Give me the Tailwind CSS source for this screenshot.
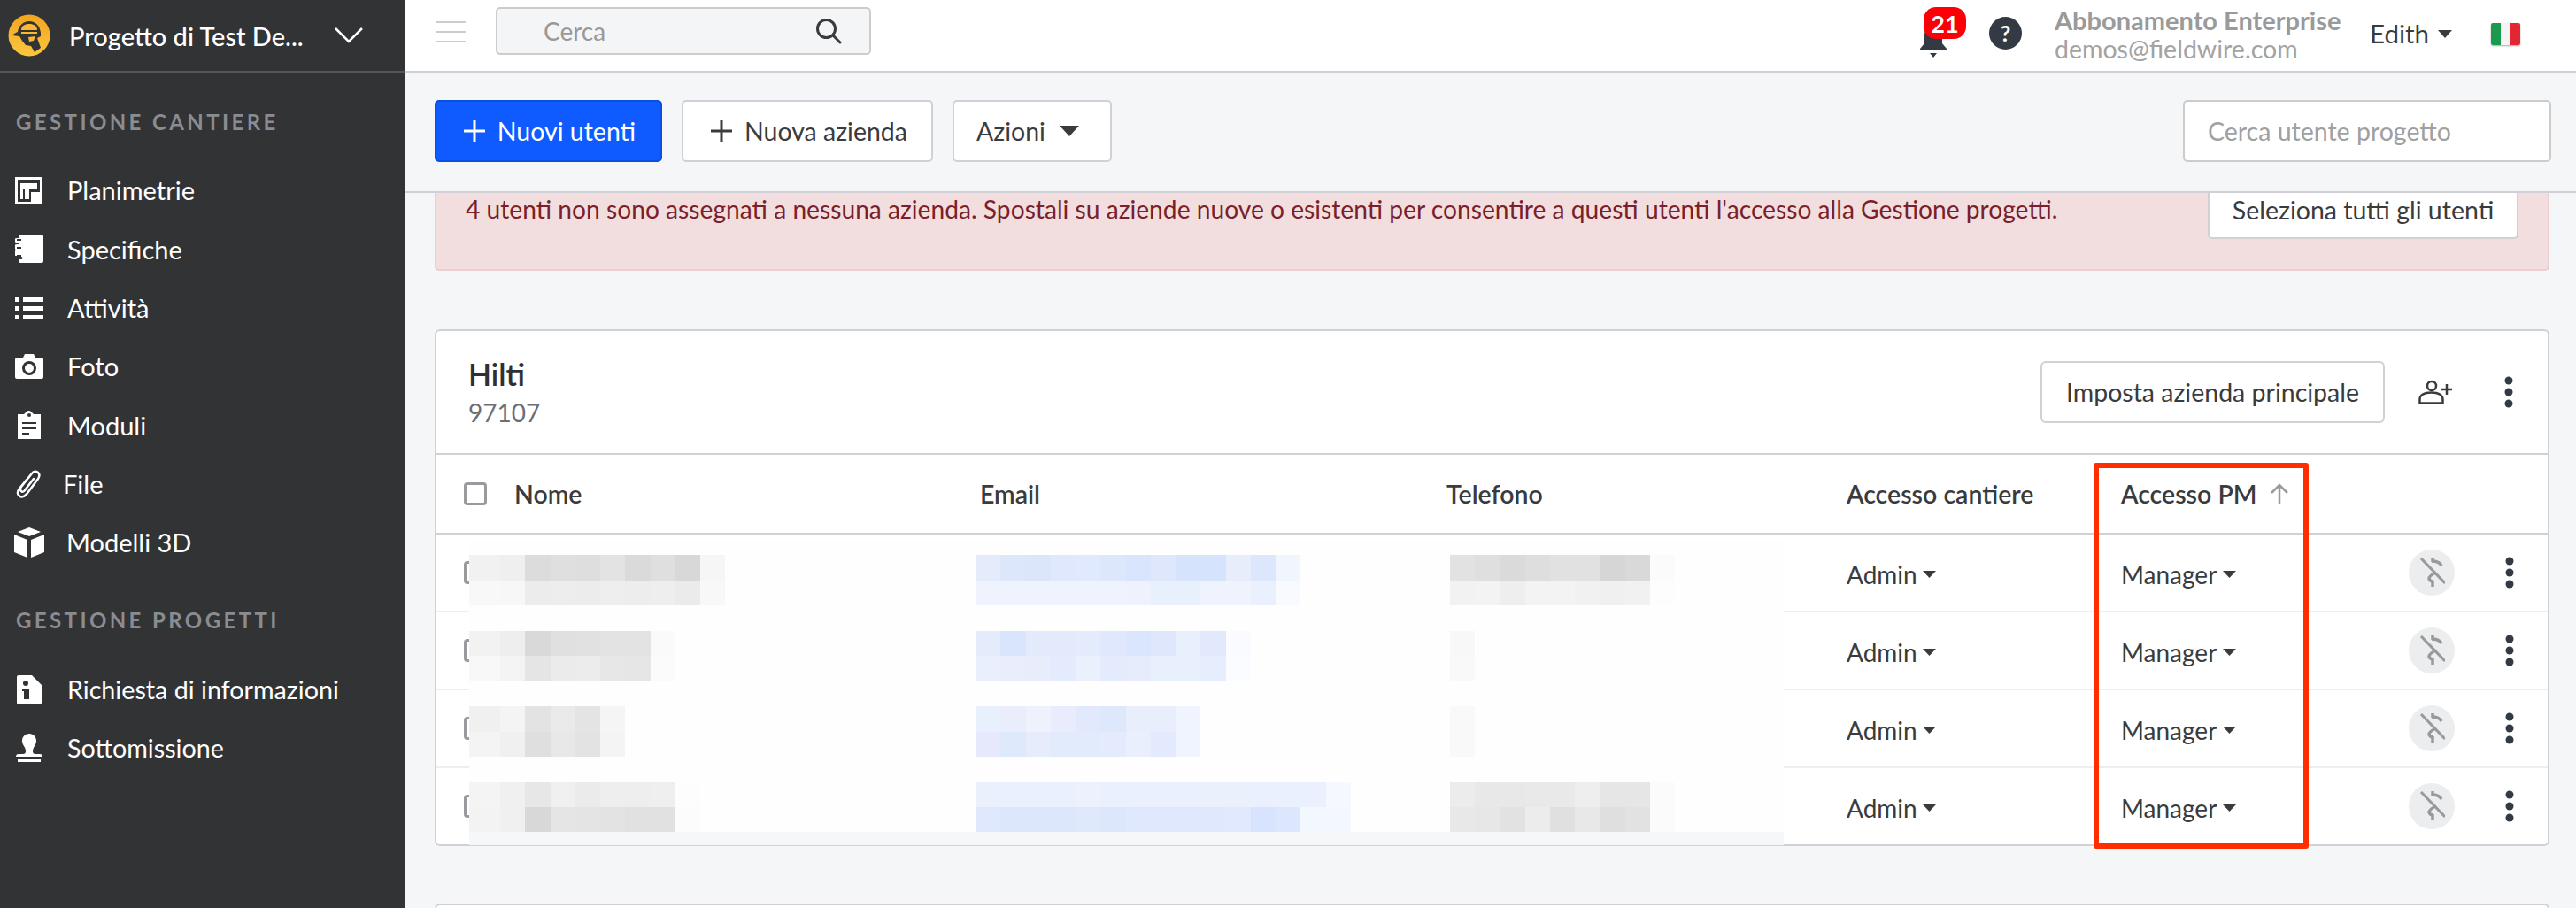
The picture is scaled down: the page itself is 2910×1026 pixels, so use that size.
<!DOCTYPE html>
<html lang="it">
<head>
<meta charset="utf-8">
<script src="https://cdn.jsdelivr.net/npm/@tailwindcss/browser@4"></script>
</head>
<body class="m-0">
<div class="flex h-[1026px] w-[2910px] overflow-hidden bg-[#f5f6f8] font-['Lato',sans-serif] text-[28px] text-[#3a3b3d]">
  <aside class="w-[458px] shrink-0 bg-[#323335] text-[29px] text-white">
    <div class="flex h-[82px] items-center border-b-2 border-[#55565a] pl-[9px]">
      <svg width="48" height="48" viewBox="0 0 48 48">
        <defs><linearGradient id="g" x1="0" y1="0" x2="0" y2="1"><stop offset="0" stop-color="#f2a51f"/><stop offset="1" stop-color="#fcc63f"/></linearGradient></defs>
        <circle cx="24" cy="24" r="23.5" fill="url(#g)"/>
        <path d="M5 24c1-2 4-3 6-4C12 13 17 8 24 8s12 5 13 13v4l-4 2 4 11-7 5-4-7-6-1-4-5-3-5z" fill="#323335"/>
        <path d="M15 18c0-5 4-7 9-7s9 2 9 7z" fill="#f9b733"/>
        <rect x="15" y="20" width="18" height="2" fill="#f9b733"/>
        <path d="M23 26l8-1-2 5-5 1z" fill="#f9b733"/>
      </svg>
      <span class="ml-[21px] w-[278px] font-medium leading-none whitespace-nowrap">Progetto di Test De...</span>
      <svg class="ml-[21px]" width="34" height="20" viewBox="0 0 34 20" fill="none" stroke="#fff" stroke-width="2.5"><path d="M2 2l15 15L32 2"/></svg>
    </div>
    <div class="pt-[42px] pl-[18px] text-[24px] font-bold leading-[28px] tracking-[3.4px] text-[#8b8c91] whitespace-nowrap">GESTIONE CANTIERE</div>
    <nav class="mt-[30px] flex flex-col">
      <a class="flex h-[66.300px] items-center gap-[27px] pl-[17px]">
        <svg width="32" height="32" viewBox="0 0 32 32" fill="#fff"><path fill-rule="evenodd" d="M0 1h31v31H0zM3 4v25h25V4z"/><path d="M6 8h19v6H16v12h-5V14H9v12H6z"/><path d="M18 18h10v11H18z"/></svg>
        <span>Planimetrie</span>
      </a>
      <a class="flex h-[66.300px] items-center gap-[27px] pl-[17px]">
        <svg width="32" height="32" viewBox="0 0 32 32" fill="#fff"><path d="M6 0h24a2 2 0 0 1 2 2v28a2 2 0 0 1-2 2H6a2 2 0 0 1-2-2v-2h3a1.500 1.500 0 0 0 0-3H4v-1H1.500a3 3 0 0 1 0-6H4v-1H2a3 3 0 0 1 0-6h2v-1H2a3 3 0 0 1 0-6h2V2a2 2 0 0 1 2-2z"/><path d="M2 6h5M2 15h5M2 24h5" stroke="#323335" stroke-width="2"/></svg>
        <span>Specifiche</span>
      </a>
      <a class="flex h-[66.300px] items-center gap-[27px] pl-[17px]">
        <svg width="32" height="26" viewBox="0 0 32 26" fill="#fff"><path d="M0 1h5v5H0zM9 1h23v5H9zM0 11h5v5H0zM9 11h23v5H9zM0 21h5v5H0zM9 21h23v5H9z"/></svg>
        <span>Attività</span>
      </a>
      <a class="flex h-[66.300px] items-center gap-[27px] pl-[17px]">
        <svg width="32" height="28" viewBox="0 0 32 28" fill="#fff"><path fill-rule="evenodd" d="M2 4h7l2-4h10l2 4h7a2 2 0 0 1 2 2v20a2 2 0 0 1-2 2H2a2 2 0 0 1-2-2V6a2 2 0 0 1 2-2zM16 8a8 8 0 1 0 0 16 8 8 0 0 0 0-16zm0 3a5 5 0 1 1 0 10 5 5 0 0 1 0-10z"/></svg>
        <span>Foto</span>
      </a>
      <a class="flex h-[66.300px] items-center gap-[27px] pl-[17px]">
        <svg width="32" height="32" viewBox="0 0 32 32" fill="#fff"><path fill-rule="evenodd" d="M3 4h7l3-3a4 4 0 0 1 5 0l3 3h8v28H3zM16 3a2 2 0 1 0 0 4 2 2 0 0 0 0-4zM8 13v2h16v-2zM8 19v2h16v-2zM8 25v2h8v-2z"/></svg>
        <span>Moduli</span>
      </a>
      <a class="flex h-[66.300px] items-center gap-[24px] pl-[17px]">
        <svg width="30" height="32" viewBox="0 0 30 32" fill="none" stroke="#fff" stroke-width="2.5" stroke-linecap="round"><path d="M13 11L5 21c-3 4-2 7 0 8.500s5 1 8-2L26 10c2-3 2-5 0-7s-5-1.500-7 1L7 19c-2 3-1 4 0 5s3 1 4-1l10-13"/></svg>
        <span>File</span>
      </a>
      <a class="flex h-[66.300px] items-center gap-[25px] pl-[16px]">
        <svg width="34" height="34" viewBox="0 0 34 34" fill="#fff"><path d="M17 0l13 5-13 5L4 5zM0 8l15 6v20L0 28zM34 8l-15 6v20l15-6z"/></svg>
        <span>Modelli 3D</span>
      </a>
    </nav>
    <div class="mt-[41px] pl-[18px] text-[24px] font-bold leading-[28px] tracking-[3.4px] text-[#8b8c91] whitespace-nowrap">GESTIONE PROGETTI</div>
    <nav class="mt-[31px] flex flex-col text-[28.700px]">
      <a class="flex h-[66.300px] items-center gap-[27px] pl-[19px]">
        <svg class="mr-[2px]" width="28" height="33" viewBox="0 0 28 33" fill="#fff"><path fill-rule="evenodd" d="M2 0h15l11 11v20a2 2 0 0 1-2 2H2a2 2 0 0 1-2-2V2a2 2 0 0 1 2-2zM7 9a3 3 0 1 0 6 0 3 3 0 0 0-6 0zM6 15v3h2v9h6V15z"/></svg>
        <span>Richiesta di informazioni</span>
      </a>
      <a class="flex h-[66.300px] items-center gap-[27px] pl-[18px]">
        <svg class="mr-[1px]" width="30" height="33" viewBox="0 0 30 33" fill="#fff"><path d="M15 0c5 0 8 4 8 8 0 5-4 7-4 12 0 2 1 3 3 3h5c2 0 3 1 3 3H0c0-2 1-3 3-3h5c2 0 3-1 3-3 0-5-4-7-4-12 0-4 3-8 8-8zM2 29h26v3H2z"/></svg>
        <span>Sottomissione</span>
      </a>
    </nav>
  </aside>

  <main class="flex min-w-0 flex-1 flex-col">
    <header class="flex h-[82px] shrink-0 items-center border-b-2 border-[#cfcfd4] bg-white pb-[4px]">
      <div class="mb-[4px] ml-[35px] flex w-[33px] flex-col gap-[9px]">
        <div class="h-[2px] bg-[#cccccc]"></div><div class="h-[2px] bg-[#cccccc]"></div><div class="h-[2px] bg-[#cccccc]"></div>
      </div>
      <div class="mb-[6px] ml-[34px] flex h-[54px] w-[424px] items-center rounded-[5px] border-2 border-[#cccccc] bg-[#f4f5f7] pl-[52px] pr-[31px] text-[#999999]">
        <span class="flex-1">Cerca</span>
        <svg width="30" height="30" viewBox="0 0 30 30" fill="none" stroke="#3a3b3d" stroke-width="3" stroke-linecap="round"><circle cx="12.500" cy="12.500" r="10"/><path d="M20 20l8 8"/></svg>
      </div>
      <div class="relative ml-[1184px] h-[60px] w-[60px]">
        <svg class="absolute left-[0px] top-[21px]" width="32" height="36" viewBox="0 0 32 36" fill="#343a44"><path d="M16 0c6 0 10 4 10 11v9l5 6v2H1v-2l5-6v-9C6 4 10 0 16 0zM12 31h8l-4 5z"/></svg>
        <span class="absolute left-[5px] top-[0px] flex h-[36px] w-[48px] items-center justify-center rounded-[14px] bg-[#fb0007] text-[27px] font-bold leading-none text-white">21</span>
      </div>
      <div class="mb-[2px] ml-[19px] flex h-[37px] w-[37px] items-center justify-center rounded-full bg-[#343a44] text-[25px] font-bold leading-none text-white">?</div>
      <div class="ml-[37px] flex w-[356px] flex-col whitespace-nowrap">
        <span class="text-[29px] font-bold leading-[34px] text-[#9a9a9a]">Abbonamento Enterprise</span>
        <span class="text-[28.500px] leading-[31px] text-[#a3a3a3]">demos@fieldwire.com</span>
      </div>
      <span class="text-[29.500px] leading-none">Edith</span>
      <svg class="ml-[10px]" width="16" height="9" viewBox="0 0 16 9" fill="#3a3b3d"><path d="M0 0h16L8 9z"/></svg>
      <div class="ml-[44px] flex h-[25px] w-[33px] overflow-hidden rounded-[2px] shadow-[0_1px_2px_rgba(0,0,0,0.35)]">
        <div class="flex-1 bg-[#1a9a4e]"></div><div class="flex-1 bg-[#f4f4f4]"></div><div class="flex-1 bg-[#e3262f]"></div>
      </div>
    </header>

    <div class="flex h-[136px] shrink-0 items-center gap-[22px] border-b-2 border-[#d0d0d6] pl-[33px] pr-[28px] pb-[2px] text-[28.500px]">
      <button class="flex h-[70px] w-[257px] items-center justify-center gap-[14px] rounded-[5px] border-2 border-[#0a4fe0] bg-[#0f5bff] pl-[3px] text-white">
        <svg width="24" height="24" viewBox="0 0 24 24" fill="none" stroke="#fff" stroke-width="3"><path d="M12 0v24M0 12h24"/></svg>Nuovi utenti
      </button>
      <button class="flex h-[70px] w-[284px] items-center justify-center gap-[14px] rounded-[5px] border-2 border-[#d0d0d6] bg-white pl-[4px]">
        <svg width="24" height="24" viewBox="0 0 24 24" fill="none" stroke="#3a3b3d" stroke-width="3"><path d="M12 0v24M0 12h24"/></svg>Nuova azienda
      </button>
      <button class="flex h-[70px] w-[180px] items-center gap-[16px] rounded-[5px] border-2 border-[#d0d0d6] bg-white pl-[25px]">
        Azioni<svg width="22" height="12" viewBox="0 0 22 12" fill="#3a3b3d"><path d="M0 0h22L11 12z"/></svg>
      </button>
      <div class="ml-auto flex h-[70px] w-[416px] items-center rounded-[5px] border-2 border-[#cccccc] bg-white pl-[26px] text-[#a0a0a0]">Cerca utente progetto</div>
    </div>

    <div class="ml-[33px] flex h-[88px] w-[2389px] shrink-0 items-start justify-between rounded-b-[5px] border-x-2 border-b-2 border-[#ebccd1] bg-[#f2dede] pl-[33px] pr-[33px] text-[28.200px] text-[#7a1f2b]">
      <span class="leading-[20px] pt-[8px]">4 utenti non sono assegnati a nessuna azienda. Spostali su aziende nuove o esistenti per consentire a questi utenti l'accesso alla Gestione progetti.</span>
      <button class="flex h-[52px] w-[351px] items-center justify-center rounded-b-[5px] border-x-2 border-b-2 border-[#d0d0d6] bg-white pb-[12px] text-[28.500px] text-[#3a3b3d]">Seleziona tutti gli utenti</button>
    </div>

    <section class="relative ml-[33px] mt-[66px] w-[2389px] shrink-0 rounded-[6px] border-2 border-[#d0d0d6] bg-white">
      <div class="flex h-[140px] items-center border-b-2 border-[#d0d0d6] pl-[36px] pr-[39px]">
        <div class="flex flex-col pt-[4px]">
          <span class="text-[34px] font-semibold leading-[42px] text-[#2f3033]">Hilti</span>
          <span class="text-[28px] leading-[44px] text-[#6b6f75]">97107</span>
        </div>
        <button class="ml-auto flex h-[70px] w-[389px] items-center justify-center rounded-[6px] border-2 border-[#d0d0d6] bg-white text-[28.500px]">Imposta azienda principale</button>
        <svg class="ml-[38px]" width="40" height="28" viewBox="0 0 40 28" fill="none" stroke="#3a3b3d" stroke-width="2.500"><circle cx="15" cy="7" r="5"/><path d="M1.500 26.500v-4c0-5 5-8 13-8s13 3 13 8v4zM26 11h12M32 5v12"/></svg>
        <svg class="ml-[57px]" width="10" height="36" viewBox="0 0 10 36" fill="#343a44"><circle cx="5" cy="5" r="4.500"/><circle cx="5" cy="18" r="4.500"/><circle cx="5" cy="31" r="4.500"/></svg>
      </div>

      <div class="grid h-[90px] grid-cols-[614px_527px_452px_310px_325px_114px_1fr] items-center border-b-2 border-[#d0d0d6] text-[28.500px] font-semibold">
        <div class="flex items-center pl-[31px]"><span class="h-[26px] w-[26px] rounded-[4px] border-[3px] border-[#9a9a9e]"></span><span class="ml-[31px]">Nome</span></div>
        <div>Email</div><div>Telefono</div><div>Accesso cantiere</div>
        <div class="flex items-center">Accesso PM<svg class="ml-[14px]" width="22" height="24" viewBox="0 0 22 24" fill="none" stroke="#9a9a9e" stroke-width="2.500"><path d="M11 24V2M2 11l9-9 9 9"/></svg></div>
      </div>

      <div>
        <div class="grid h-[88px] grid-cols-[616px_527px_450px_310px_325px_114px_1fr] items-center border-b-2 border-[#eeeeef]">
          <div class="pl-[31px]"><span class="block h-[26px] w-[26px] rounded-[4px] border-[3px] border-[#9a9a9e]"></span></div><div></div><div></div>
          <div class="flex items-center gap-[6px] pt-[4px]">Admin<svg width="15" height="8" viewBox="0 0 15 8" fill="#3a3b3d"><path d="M0 0h15L7.500 8z"/></svg></div>
          <div class="flex items-center gap-[7px] pt-[4px]">Manager<svg width="15" height="8" viewBox="0 0 15 8" fill="#3a3b3d"><path d="M0 0h15L7.500 8z"/></svg></div>
          <div class="flex h-[52px] w-[52px] items-center justify-center rounded-full bg-[#ecedee]"><svg width="30" height="34" viewBox="0 0 30 34" fill="none" stroke="#999999" stroke-width="3.500"><path d="M3 1l27 28" stroke-width="3"/><path d="M16 0v5M15 4c5 0 9 1 11 5M20 17c-5 2-8 4-8 7 1 3 3 3 5 3M16 26v7"/></svg></div>
          <svg class="ml-[-5px]" width="10" height="36" viewBox="0 0 10 36" fill="#343a44"><circle cx="5" cy="5" r="4.500"/><circle cx="5" cy="18" r="4.500"/><circle cx="5" cy="31" r="4.500"/></svg>
        </div>
        <div class="grid h-[88px] grid-cols-[616px_527px_450px_310px_325px_114px_1fr] items-center border-b-2 border-[#eeeeef]">
          <div class="pl-[31px]"><span class="block h-[26px] w-[26px] rounded-[4px] border-[3px] border-[#9a9a9e]"></span></div><div></div><div></div>
          <div class="flex items-center gap-[6px] pt-[4px]">Admin<svg width="15" height="8" viewBox="0 0 15 8" fill="#3a3b3d"><path d="M0 0h15L7.500 8z"/></svg></div>
          <div class="flex items-center gap-[7px] pt-[4px]">Manager<svg width="15" height="8" viewBox="0 0 15 8" fill="#3a3b3d"><path d="M0 0h15L7.500 8z"/></svg></div>
          <div class="flex h-[52px] w-[52px] items-center justify-center rounded-full bg-[#ecedee]"><svg width="30" height="34" viewBox="0 0 30 34" fill="none" stroke="#999999" stroke-width="3.500"><path d="M3 1l27 28" stroke-width="3"/><path d="M16 0v5M15 4c5 0 9 1 11 5M20 17c-5 2-8 4-8 7 1 3 3 3 5 3M16 26v7"/></svg></div>
          <svg class="ml-[-5px]" width="10" height="36" viewBox="0 0 10 36" fill="#343a44"><circle cx="5" cy="5" r="4.500"/><circle cx="5" cy="18" r="4.500"/><circle cx="5" cy="31" r="4.500"/></svg>
        </div>
        <div class="grid h-[88px] grid-cols-[616px_527px_450px_310px_325px_114px_1fr] items-center border-b-2 border-[#eeeeef]">
          <div class="pl-[31px]"><span class="block h-[26px] w-[26px] rounded-[4px] border-[3px] border-[#9a9a9e]"></span></div><div></div><div></div>
          <div class="flex items-center gap-[6px] pt-[4px]">Admin<svg width="15" height="8" viewBox="0 0 15 8" fill="#3a3b3d"><path d="M0 0h15L7.500 8z"/></svg></div>
          <div class="flex items-center gap-[7px] pt-[4px]">Manager<svg width="15" height="8" viewBox="0 0 15 8" fill="#3a3b3d"><path d="M0 0h15L7.500 8z"/></svg></div>
          <div class="flex h-[52px] w-[52px] items-center justify-center rounded-full bg-[#ecedee]"><svg width="30" height="34" viewBox="0 0 30 34" fill="none" stroke="#999999" stroke-width="3.500"><path d="M3 1l27 28" stroke-width="3"/><path d="M16 0v5M15 4c5 0 9 1 11 5M20 17c-5 2-8 4-8 7 1 3 3 3 5 3M16 26v7"/></svg></div>
          <svg class="ml-[-5px]" width="10" height="36" viewBox="0 0 10 36" fill="#343a44"><circle cx="5" cy="5" r="4.500"/><circle cx="5" cy="18" r="4.500"/><circle cx="5" cy="31" r="4.500"/></svg>
        </div>
        <div class="grid h-[86px] grid-cols-[616px_527px_450px_310px_325px_114px_1fr] items-center">
          <div class="pl-[31px]"><span class="block h-[26px] w-[26px] rounded-[4px] border-[3px] border-[#9a9a9e]"></span></div><div></div><div></div>
          <div class="flex items-center gap-[6px] pt-[4px]">Admin<svg width="15" height="8" viewBox="0 0 15 8" fill="#3a3b3d"><path d="M0 0h15L7.500 8z"/></svg></div>
          <div class="flex items-center gap-[7px] pt-[4px]">Manager<svg width="15" height="8" viewBox="0 0 15 8" fill="#3a3b3d"><path d="M0 0h15L7.500 8z"/></svg></div>
          <div class="flex h-[52px] w-[52px] items-center justify-center rounded-full bg-[#ecedee]"><svg width="30" height="34" viewBox="0 0 30 34" fill="none" stroke="#999999" stroke-width="3.500"><path d="M3 1l27 28" stroke-width="3"/><path d="M16 0v5M15 4c5 0 9 1 11 5M20 17c-5 2-8 4-8 7 1 3 3 3 5 3M16 26v7"/></svg></div>
          <svg class="ml-[-5px]" width="10" height="36" viewBox="0 0 10 36" fill="#343a44"><circle cx="5" cy="5" r="4.500"/><circle cx="5" cy="18" r="4.500"/><circle cx="5" cy="31" r="4.500"/></svg>
        </div>
      </div>

      <div id="mosaic" class="absolute left-[37px] top-[236px] flex h-[345px] w-[1485px] flex-col gap-[28.500px] bg-[#fefefe] pt-[17px]"></div>
      <div class="absolute left-[37px] top-[566px] h-[15px] w-[1485px] bg-[#f6f7f8]"></div>
      <div class="pointer-events-none absolute left-[1872px] top-[149px] h-[436px] w-[243px] rounded-[3px] border-[6px] border-[#ff2d00]"></div>
    </section>

    <section class="ml-[33px] mt-[65px] h-[40px] w-[2389px] shrink-0 rounded-t-[6px] border-2 border-[#d0d0d6] bg-white"></section>
  </main>
</div>
<script>
  const data = [
    [["f1f1f1 efefef dcdcdc dfdfdf dedede e3e3e3 dadada dfdfdf d8d8d8 f6f6f6","f8f8f8 f7f7f7 ececec ededed ececec eeeeee ededed eeeeee ebebeb f8f8f8"],
     ["e4ebfb dce7fc dbe6fb dfe8fc e0e9fd dde7fc d9e5fc dfe7fc d6e3fd d6e3fd e8edfb dce7fd f1f5fe","eef3fd eef3fd eef3fd eef3fd eef3fd eef3fd eff2fc e9f0fd e9f0fd eef3fd eef3fd eaf0fd f9fafe"],
     ["e2e2e2 dfdfdf dadada dedede e1e1e1 e1e1e1 d6d6d6 d9d9d9 fbfbfb","f2f2f2 f3f3f3 eeeeee f3f3f3 f3f3f3 f1f1f1 f0f0f0 f1f1f1 fdfdfd"]],
    [["f1f2f1 eeeeee d9d9d9 e0e0e0 e1e1e1 e3e3e3 e3e3e3 fafafa","f8f8f8 f4f4f4 e5e5e5 ebebeb ececec e7e7e7 e6e6e6 fbfbfb"],
     ["e4ecfc d9e5fd e2eafc e2eafc e3ebfc dfe8fd dae6fd dee7fc e8effd e2e9fc fafbff","e9effd e9edfc e8edfc e4ebfd ebf0fd e4ebfd e7ecfc e9f0fd e9f0fd e6edfd fbfcff"],
     ["f8f8f8","f9f9f9"]],
    [["f0f0f0 f4f4f4 e3e3e3 eaeaea e4e4e4 f5f5f5","f4f4f4 f0f0f0 dfdfdf e8e8e8 e3e3e3 f4f4f4"],
     ["e9f0fd e9edfc edf2fd e8ecfc e2e9fc dee8fd e9eefc e9eefc f0f4fe","e5e9fb deeafc e7ecfc e1ebfc e1ebfc e4ebfc e9effd e3eafd f0f4fe"],
     ["f9f9f9","f9f9f9"]],
    [["f3f4f3 f0f0f0 e7e7e7 f0f0f0 ebebeb eeeeee eeeeee efefef fdfdfd","f3f3f3 f0f0f0 d8d8d8 e5e5e5 e4e4e4 e3e3e3 e1e1e1 e1e1e1 fcfcfc"],
     ["ebf0fd eaf0fd eaf0fd eaf0fd ecf1fd eaf0fd eaf0fd eaf0fd eaf0fd ebf0fd ebf0fd eaf0fe eaf0fe eaf0fe f5f8fe","dfe8fc dde7fc dde7fc dde7fc e0e9fc dde7fc dfe8fc dfe8fd dfe8fd dfe8fd e0e9fd d8e3fd dce7fd f3f7fe f3f7fe"],
     ["ececec e8e8e8 e8e8e8 e9e9e9 e9e9e9 eeeeee e6e6e6 e6e6e6 fbfbfb","e8e8e8 e7e7e7 e2e2e2 ececec e0e0e0 e8e8e8 dfdfdf e2e2e2 fbfbfb"]]
  ];
  const groupWidths = [572, 536, 300];
  const mosaic = document.getElementById('mosaic');
  data.forEach(function (block) {
    const row = document.createElement('div');
    row.className = 'flex h-[57px] w-full';
    block.forEach(function (group, g) {
      const col = document.createElement('div');
      col.className = 'flex shrink-0 flex-col';
      col.style.width = groupWidths[g] + 'px';
      group.forEach(function (line) {
        const l = document.createElement('div');
        l.className = 'flex h-[28.500px]';
        line.split(' ').forEach(function (c, i) {
          const cell = document.createElement('div');
          cell.style.width = (g === 0 && i === 0 ? 35 : 28.25) + 'px';
          cell.style.background = '#' + c;
          l.appendChild(cell);
        });
        col.appendChild(l);
      });
      row.appendChild(col);
    });
    mosaic.appendChild(row);
  });
</script>
</body>
</html>
